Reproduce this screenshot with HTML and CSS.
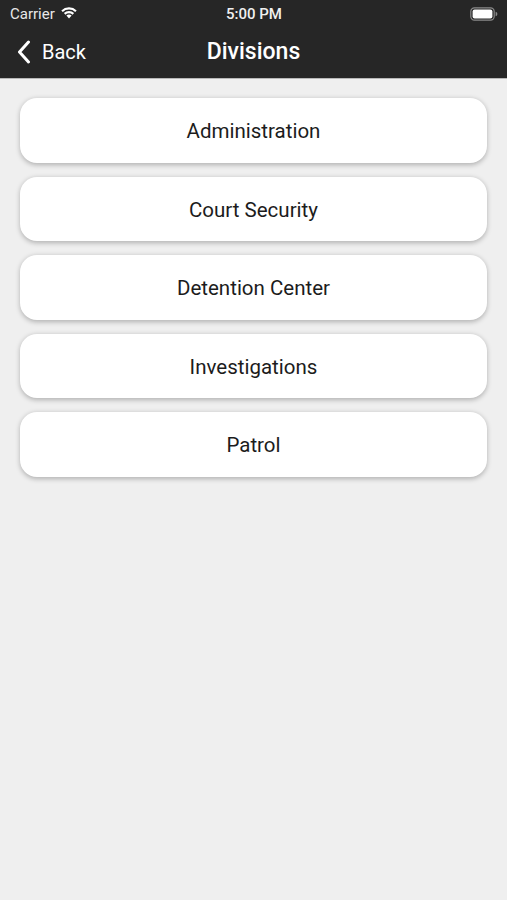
FILE: index.html
```html
<!DOCTYPE html>
<html>
<head>
<meta charset="utf-8">
<link rel="stylesheet" href="styles.css">
</head>
<body>
<div class="screen">
  <header class="topbar">
    <div class="status">
      <div class="status-left">
        <span class="carrier">Carrier</span>
        <svg class="wifi" width="18" height="13" viewBox="0 0 18 13">
          <path d="M9 12.5 L6.4 9.6 A3.8 3.8 0 0 1 11.6 9.6 Z" fill="#fff"/>
          <path d="M3.9 7.1 A7.4 7.4 0 0 1 14.1 7.1 L12.6 8.7 A5.3 5.3 0 0 0 5.4 8.7 Z" fill="#fff"/>
          <path d="M1.3 4.4 A11.1 11.1 0 0 1 16.7 4.4 L15.2 6 A9 9 0 0 0 2.8 6 Z" fill="#fff"/>
        </svg>
      </div>
      <div class="time">5:00 PM</div>
      <div class="status-right">
        <svg class="battery" width="28" height="14" viewBox="0 0 28 14">
          <rect x="0.8" y="0.8" width="23.4" height="12.4" rx="3.6" fill="none" stroke="#8a8a8a" stroke-width="1.2"/>
          <rect x="2.6" y="2.6" width="19.8" height="8.8" rx="2" fill="#fff"/>
          <path d="M25.6 4.8 Q27.4 5.2 27.4 7 Q27.4 8.8 25.6 9.2 Z" fill="#8a8a8a"/>
        </svg>
      </div>
    </div>
    <nav class="navbar">
      <div class="back">
        <svg class="chevron" width="14" height="24" viewBox="0 0 14 24">
          <path d="M11.5 2 L2.5 12 L11.5 22" fill="none" stroke="#fff" stroke-width="3" stroke-linecap="round" stroke-linejoin="round"/>
        </svg>
        <span>Back</span>
      </div>
      <h1 class="title">Divisions</h1>
    </nav>
  </header>
  <main class="list">
    <div class="card">Administration</div>
    <div class="card">Court Security</div>
    <div class="card">Detention Center</div>
    <div class="card">Investigations</div>
    <div class="card">Patrol</div>
  </main>
</div>
</body>
</html>
```
FILE: styles.css
```css
html, body {
  margin: 0;
  padding: 0;
}
body {
  width: 507px;
  height: 900px;
  background: #efefef;
  font-family: Roboto, "Noto Sans", "Liberation Sans", sans-serif;
  overflow: hidden;
}
.screen {
  display: flex;
  flex-direction: column;
  height: 900px;
}
.topbar {
  background: #262626;
  color: #fff;
  height: 78px;
  border-bottom: 1px solid #b8b8b8;
  display: flex;
  flex-direction: column;
}
.status {
  height: 27px;
  display: grid;
  grid-template-columns: 1fr auto 1fr;
  align-items: center;
  padding: 0 9px 0 10px;
}
.status-left {
  display: flex;
  align-items: center;
  gap: 5px;
}
.carrier {
  font-size: 15px;
  color: #e8e8e8;
}
.wifi {
  margin-top: -3px;
}
.time {
  font-size: 15px;
  font-weight: 500;
  color: #f0f0f0;
}
.status-right {
  display: flex;
  justify-content: flex-end;
}
.navbar {
  flex: 1;
  position: relative;
  display: flex;
  align-items: center;
  justify-content: center;
}
.back {
  position: absolute;
  left: 17px;
  top: 0;
  bottom: 2px;
  display: flex;
  align-items: center;
  gap: 11px;
  font-size: 20px;
  color: #fff;
}
.title {
  margin: 0 0 3px;
  font-size: 23px;
  font-weight: 500;
  color: #fff;
}
.list {
  display: flex;
  flex-direction: column;
  gap: 14px;
  padding: 19px 20px 0 20px;
}
.card {
  height: 64.5px;
  box-sizing: border-box;
  padding-top: 2px;
  background: #fff;
  border-radius: 17px;
  box-shadow: 0 1.5px 5px rgba(0,0,0,0.26);
  display: flex;
  align-items: center;
  justify-content: center;
  font-size: 20.5px;
  color: #1c1c1c;
}
```
